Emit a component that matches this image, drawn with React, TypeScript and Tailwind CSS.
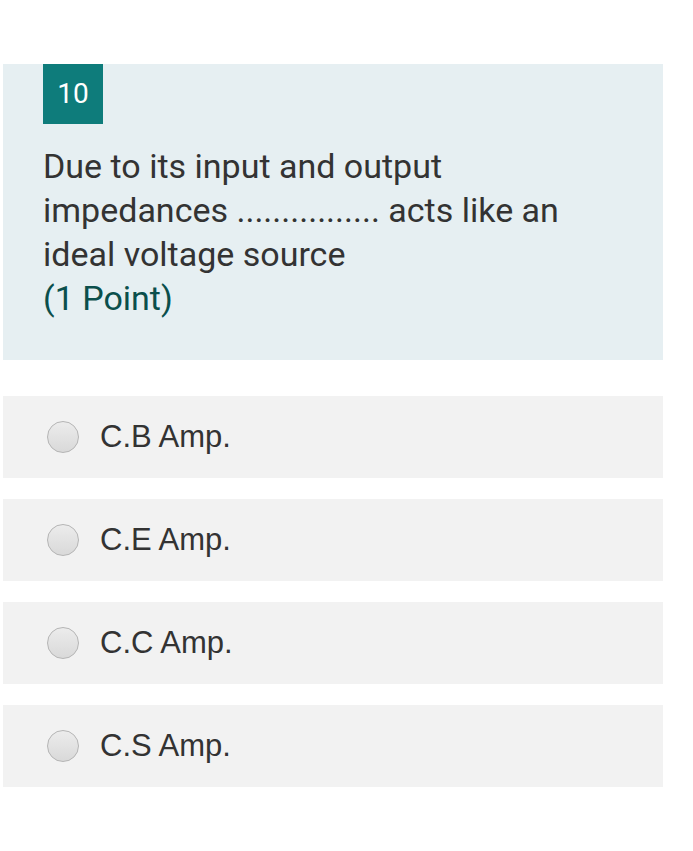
import React from "react";

const options = ["C.B Amp.", "C.E Amp.", "C.C Amp.", "C.S Amp."];

export default function App() {
  return (
    <div className="w-[693px] h-[851px] bg-white pt-[64px] pl-[3px]" style={{ fontFamily: "Roboto, sans-serif" }}>
      <div className="w-[660px] h-[296px] bg-[#e6eff2] pl-[40px]">
        <div className="w-[60px] h-[60px] bg-[#0e7c7b] text-white text-[28px] flex items-center justify-center">10</div>
        <div className="mt-[20px] text-[34px] leading-[44px] text-[#333333] w-[610px]">
          Due to its input and output
          <br />
          impedances ................ acts like an
          <br />
          ideal voltage source
        </div>
        <div className="text-[34px] leading-[44px] text-[#0b4f4c]">(1 Point)</div>
      </div>
      <div className="mt-[36px] flex flex-col gap-[21px]">
        {options.map((o) => (
          <div key={o} className="w-[660px] h-[82px] bg-[#f2f2f2] flex items-center pl-[44px]">
            <div className="w-[32px] h-[32px] rounded-full border border-[#b5b5b5] bg-gradient-to-b from-[#ececec] to-[#d9d9d9]" />
            <span className="ml-[21px] text-[31px] text-[#333333]" style={{ fontFamily: '"Liberation Sans", Arial, sans-serif' }}>{o}</span>
          </div>
        ))}
      </div>
    </div>
  );
}
